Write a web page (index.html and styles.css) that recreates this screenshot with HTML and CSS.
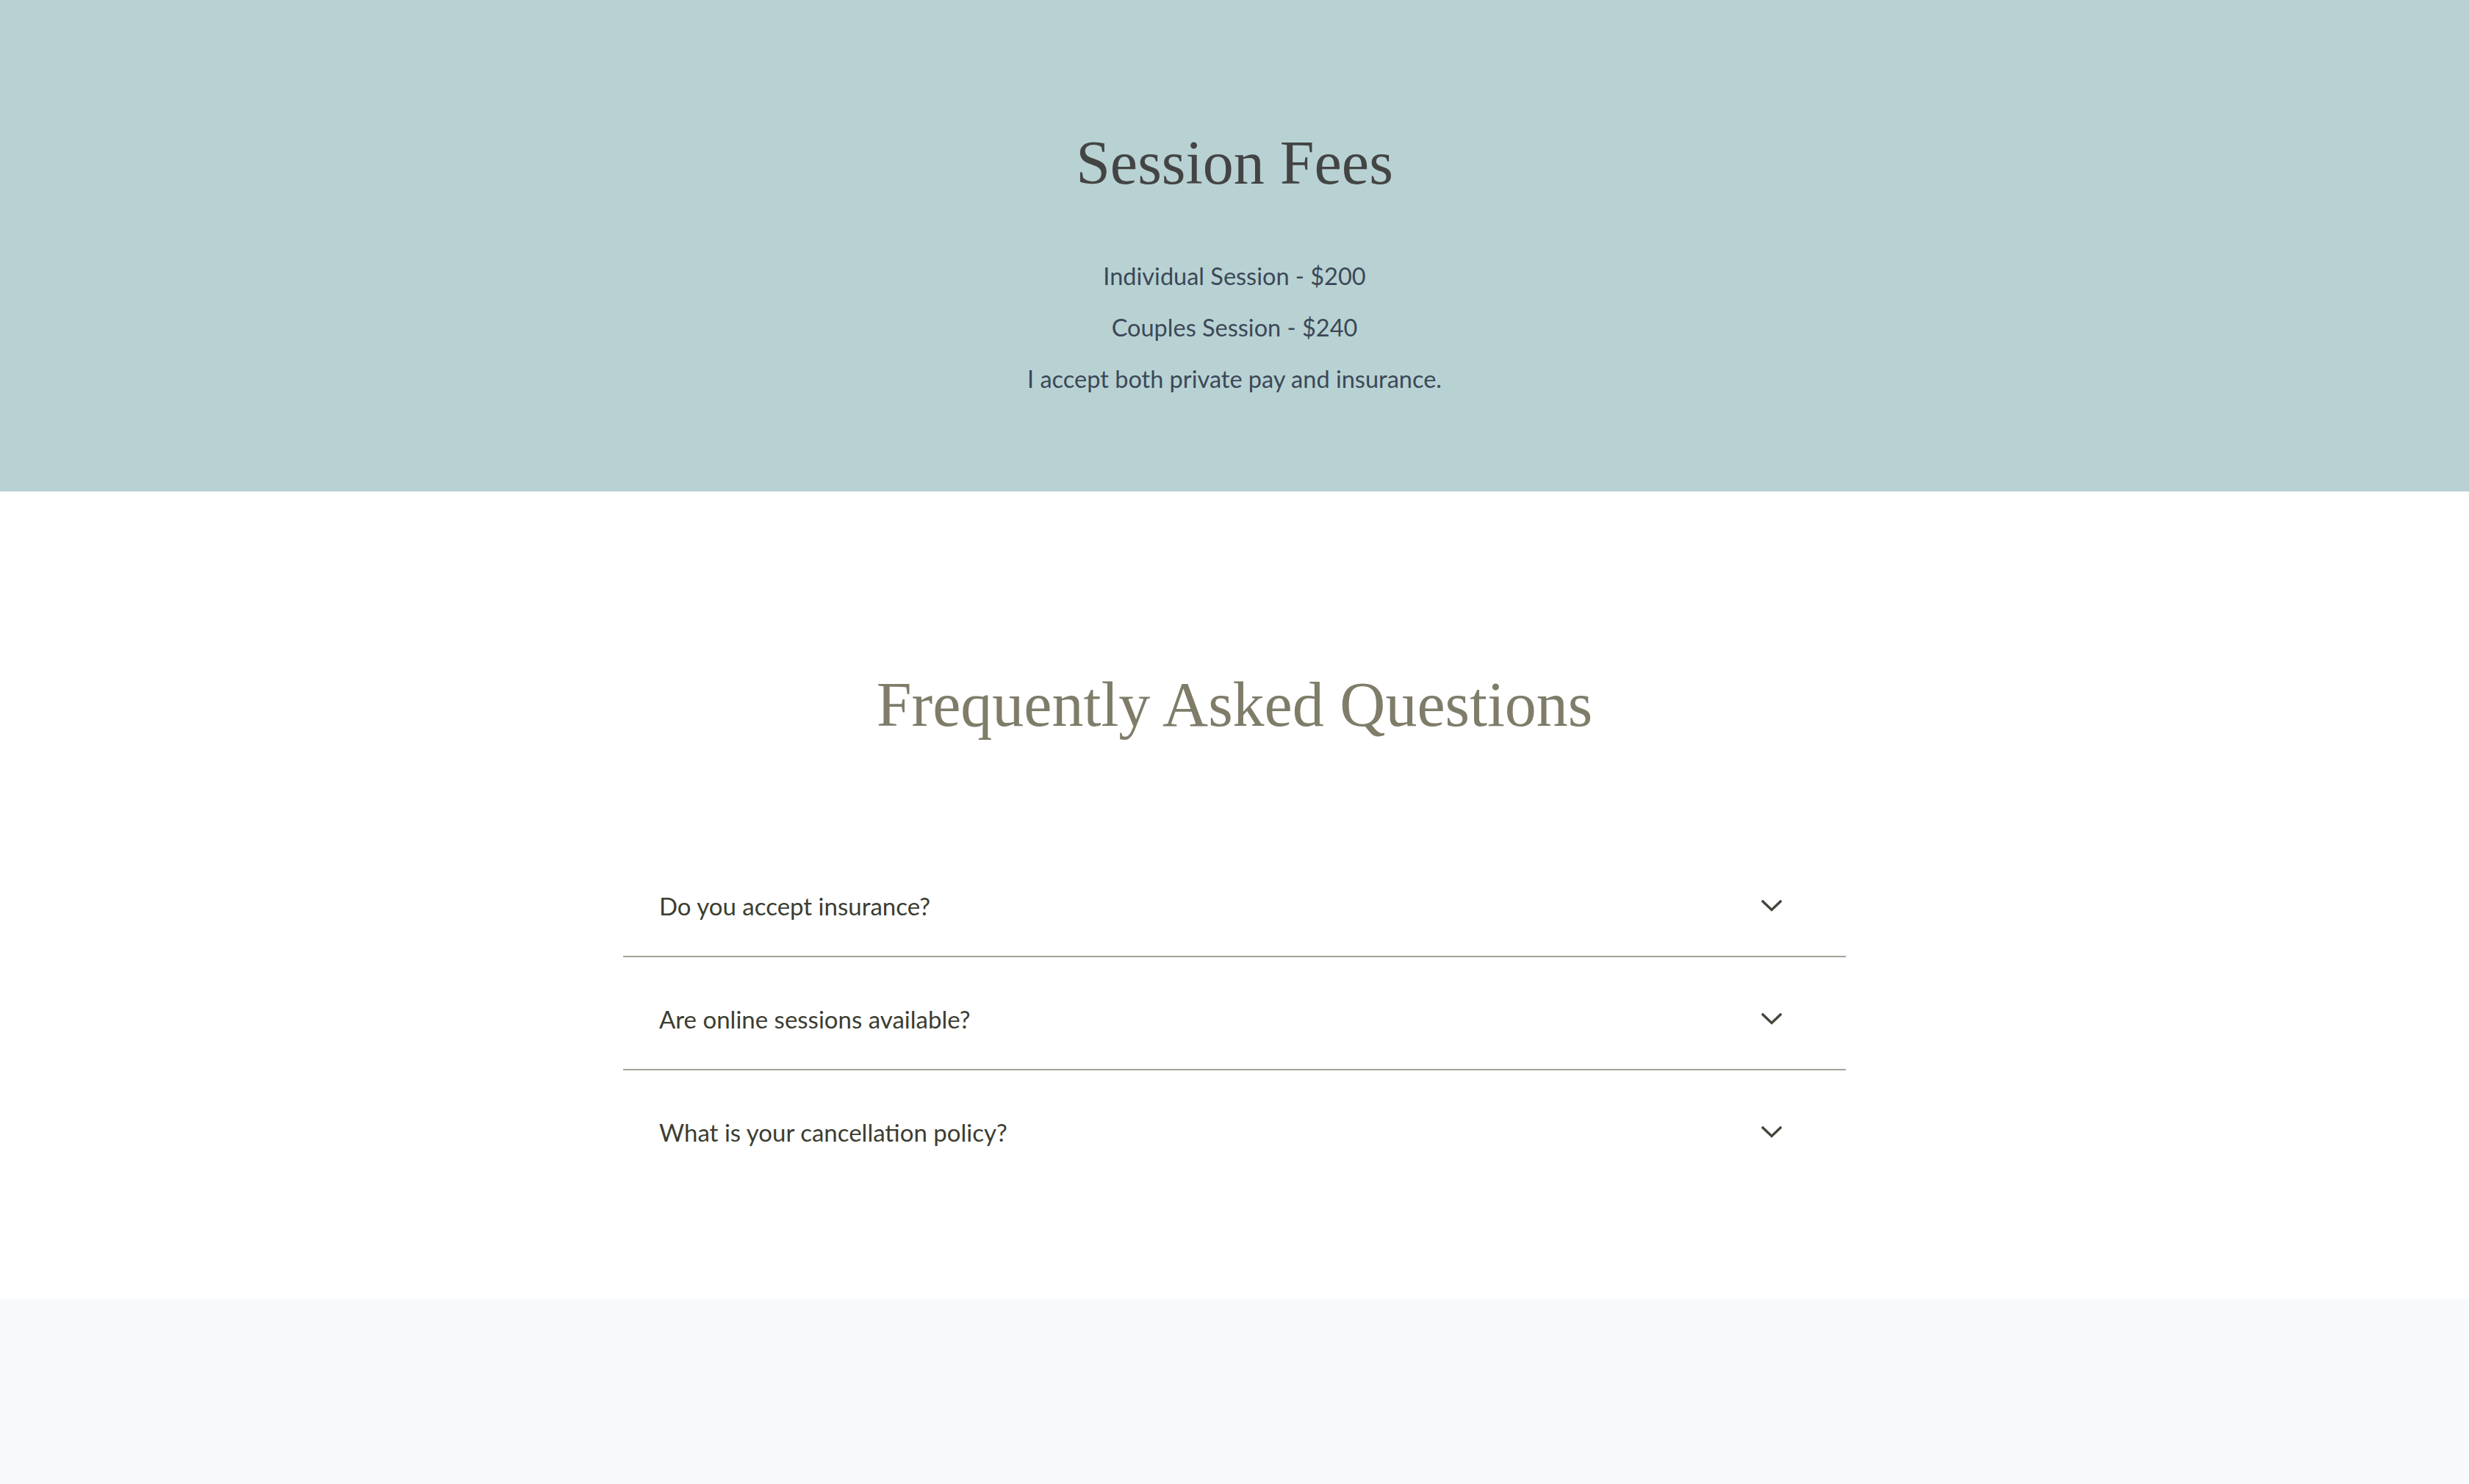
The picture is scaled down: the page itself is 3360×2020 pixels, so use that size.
FILE: index.html
```html
<!DOCTYPE html>
<html lang="en">
<head>
  <meta charset="UTF-8">
  <meta name="viewport" content="width=device-width, initial-scale=1.0">
  <title>Session Fees &amp; FAQ</title>
  <link rel="stylesheet" href="styles.css">
</head>
<body>
  <section class="fees">
    <h1 class="fees-title">Session Fees</h1>
    <p>Individual Session - $200</p>
    <p>Couples Session - $240</p>
    <p>I accept both private pay and insurance.</p>
  </section>

  <section class="faq">
    <h2 class="faq-title">Frequently Asked Questions</h2>
    <div class="faq-list">
      <div class="faq-item">
        <span class="question">Do you accept insurance?</span>
        <svg class="chevron" viewBox="0 0 28 16" width="28" height="16"><polyline points="2,2 14,13.5 26,2"/></svg>
      </div>
      <div class="faq-item">
        <span class="question">Are online sessions available?</span>
        <svg class="chevron" viewBox="0 0 28 16" width="28" height="16"><polyline points="2,2 14,13.5 26,2"/></svg>
      </div>
      <div class="faq-item">
        <span class="question">What is your cancellation policy?</span>
        <svg class="chevron" viewBox="0 0 28 16" width="28" height="16"><polyline points="2,2 14,13.5 26,2"/></svg>
      </div>
    </div>
  </section>

  <footer class="footer"></footer>
</body>
</html>
```

FILE: styles.css
```css
/* General Styles */
body {
  margin: 0;
  padding: 0;
  font-family: 'Lato', 'Open Sans', sans-serif;
  background: #fff;
}

/* Fees Section */
.fees {
  background: #b8d2d3;
  text-align: center;
  padding: 172px 20px 134px;
}

.fees-title {
  font-family: 'Liberation Serif', serif;
  font-weight: 400;
  font-size: 84px;
  line-height: 1.2;
  color: #444444;
  margin: 0 0 83px;
}

.fees p {
  font-size: 32.5px;
  line-height: 39px;
  color: #3c4858;
  margin: 0 0 31px;
}

.fees p:last-child {
  margin-bottom: 0;
}

/* FAQ Section */
.faq {
  padding: 239px 20px 159px;
}

.faq-title {
  font-family: 'Liberation Serif', serif;
  font-weight: 400;
  font-size: 86px;
  line-height: 1.2;
  color: #7f7d6a;
  text-align: center;
  margin: 0 0 138px;
}

.faq-list {
  width: 1664px;
  margin: 0 auto;
}

.faq-item {
  display: flex;
  justify-content: space-between;
  align-items: center;
  padding: 60px 87px 44px 49px;
  border-bottom: 2px solid #a3a29b;
}

.faq-item:last-child {
  border-bottom: none;
}

.question {
  font-size: 33px;
  line-height: 48px;
  color: #3c3d31;
}

.chevron {
  fill: none;
  stroke: #45463a;
  stroke-width: 3.4;
  stroke-linecap: square;
}

/* Footer */
.footer {
  background: #f8f9fa;
  height: 260px;
}
```
